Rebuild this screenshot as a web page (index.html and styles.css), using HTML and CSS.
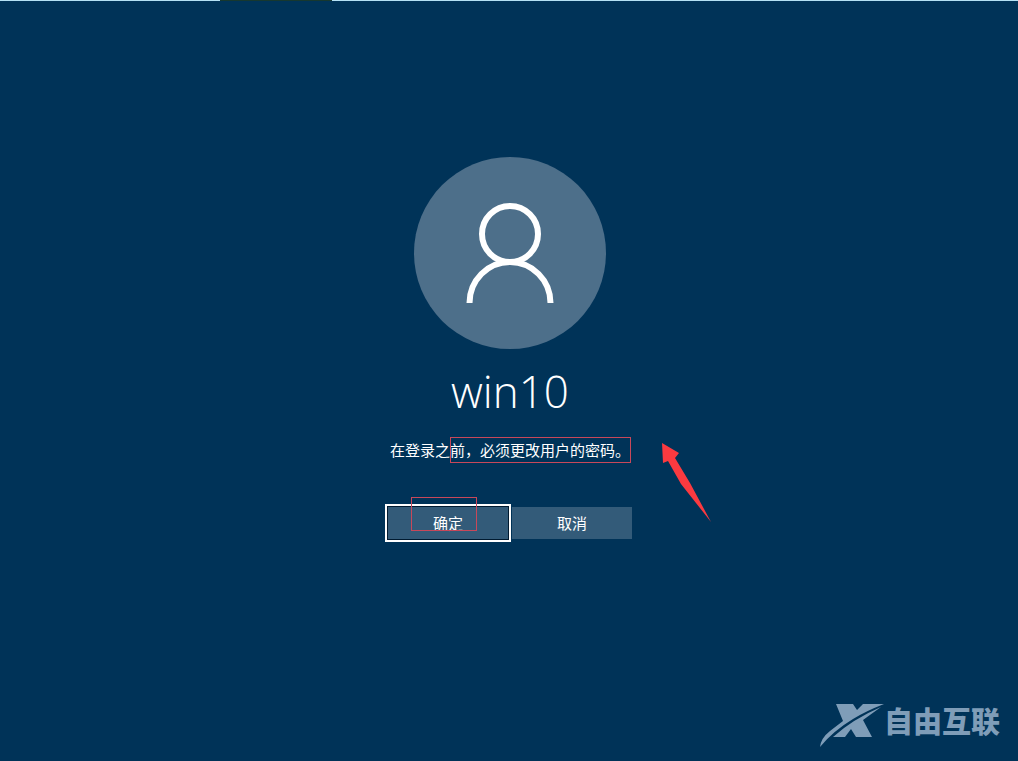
FILE: index.html
```html
<!DOCTYPE html>
<html lang="zh-CN">
<head>
<meta charset="utf-8">
<title>win10</title>
<link rel="stylesheet" href="styles.css">
</head>
<body>
<div class="edge"><span class="edge-mark"></span></div>
<main class="login">
  <svg class="avatar" viewBox="0 0 192 192" aria-hidden="true">
    <circle class="avatar-disc" cx="96" cy="96" r="96"/>
    <g class="avatar-line">
      <circle cx="96" cy="77" r="28"/>
      <path d="M55.500 146A40.500 41 0 0 1 136.500 146"/>
    </g>
  </svg>
  <h1 class="user">win10</h1>
  <p class="message">在登录之前，必须更改用户的密码。<span class="mark mark-message"></span>
    <svg class="arrow" viewBox="0 0 50 80" aria-hidden="true"><path d="M0 0L17 10L13 15L28 40L49 79L19 41L6 18L1 20Z"/></svg>
  </p>
  <div class="actions">
    <button class="button button-primary" type="button">确定</button>
    <button class="button" type="button">取消</button>
    <span class="mark mark-button"></span>
  </div>
</main>
<footer class="brand">
  <svg class="brand-logo" viewBox="0 0 66 44" aria-hidden="true">
    <path d="M18 0H35L39 6L45 0H66Q48 7 35 15Q15 27 2 43Q3 34 12 27L25 17Z"/>
    <path d="M63 3L45 16L54 33H38L33 25L27 33H15Q35 15 63 3Z"/>
  </svg>
  <span class="brand-name">自由互联</span>
</footer>
</body>
</html>
```
FILE: styles.css
```css
* {
  box-sizing: border-box;
}

body {
  margin: 0;
  min-height: 100vh;
  display: flex;
  flex-direction: column;
  background: #003358;
  color: #fff;
  font-family: "Open Sans", "Noto Sans CJK SC", sans-serif;
}

.edge {
  height: 1px;
  background: #b5e2f5;
}

.edge-mark {
  display: block;
  width: 112px;
  height: 1px;
  margin-left: 220px;
  background: #17382f;
}

.login {
  flex: 1;
  display: flex;
  flex-direction: column;
  align-items: center;
  padding: 156px 0 0 2px;
}

.avatar {
  width: 192px;
  height: 192px;
}

.avatar-disc {
  fill: #4d6f8a;
}

.avatar-line {
  fill: none;
  stroke: #fff;
  stroke-width: 6;
}

.user {
  margin: 8px 0 0;
  font-size: 44px;
  font-weight: 300;
  line-height: 68px;
}

.message {
  position: relative;
  margin: 13px 0 0;
  font-family: "Noto Sans CJK SC", sans-serif;
  font-size: 15px;
  line-height: 24px;
}

.actions {
  position: relative;
  display: flex;
  gap: 4px;
  margin-top: 45px;
}

.button {
  width: 120px;
  height: 32px;
  padding: 0;
  border: 0;
  background: #335b79;
  color: #fff;
  font-family: "Noto Sans CJK SC", sans-serif;
  font-size: 15px;
  line-height: 32px;
}

.button-primary {
  outline: 2px solid #fff;
  outline-offset: 1px;
  box-shadow: 0 0 0 1px #001a30;
}

.mark {
  position: absolute;
  z-index: 1;
  border: 1px solid #c8485a;
}

.mark-message {
  left: 60px;
  top: -1px;
  width: 181px;
  height: 26px;
}

.mark-button {
  left: 23px;
  top: -10px;
  width: 66px;
  height: 34px;
}

.arrow {
  position: absolute;
  left: 272px;
  top: 5px;
  width: 50px;
  height: 80px;
  fill: #fb3a40;
}

.brand {
  display: flex;
  align-items: flex-start;
  justify-content: flex-end;
  padding: 0 18px 13px 0;
  color: #7f9db8;
}

.brand-logo {
  width: 66px;
  height: 44px;
  fill: currentColor;
}

.brand-name {
  font-family: "Noto Sans CJK SC", sans-serif;
  font-size: 29px;
  font-weight: 900;
  line-height: 32px;
}
```
